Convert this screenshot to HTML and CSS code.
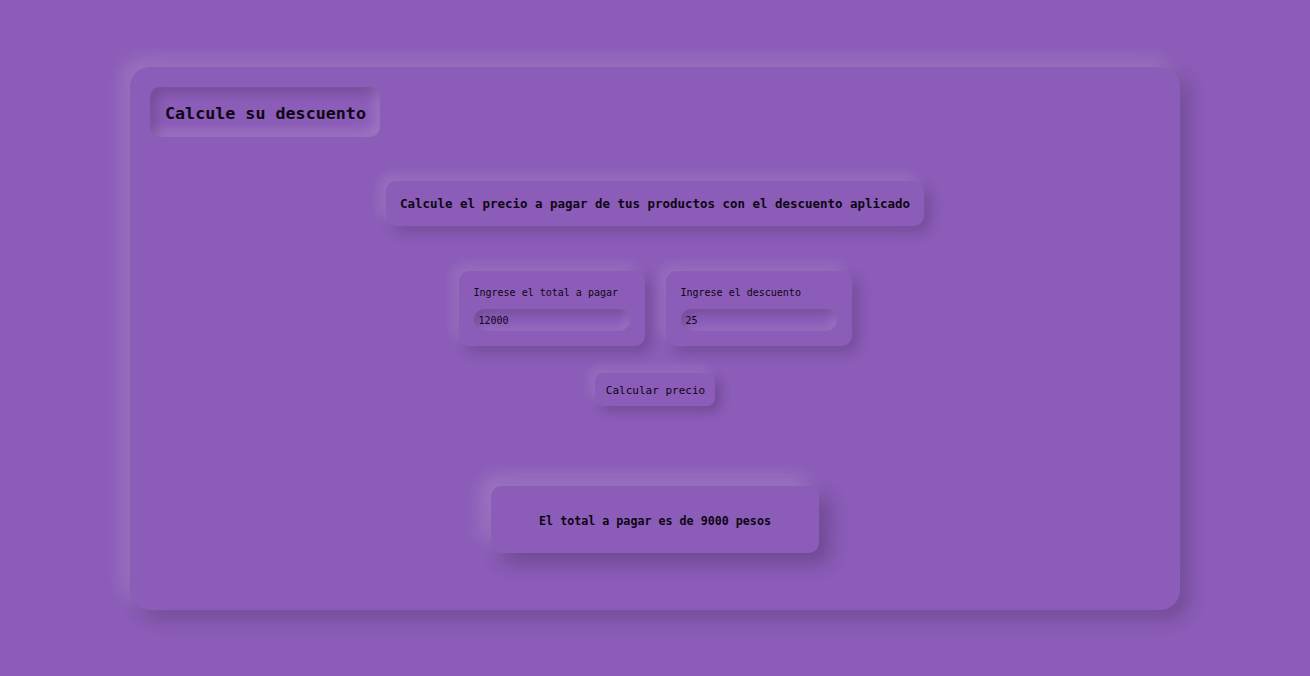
FILE: index.html
```html
<!DOCTYPE html>
<html lang="es">
<head>
<meta charset="utf-8">
<title>Calcule su descuento</title>
<link rel="stylesheet" href="styles.css">
</head>
<body>
<main class="card">
  <h1 class="title">Calcule su descuento</h1>
  <section class="content">
    <p class="subtitle">Calcule el precio a pagar de tus productos con el descuento aplicado</p>
    <div class="fields">
      <div class="field">
        <label class="label" for="total">Ingrese el total a pagar</label>
        <input class="input" id="total" type="text" value="12000">
      </div>
      <div class="field">
        <label class="label" for="desc">Ingrese el descuento</label>
        <input class="input" id="desc" type="text" value="25">
      </div>
    </div>
    <button class="btn" type="button">Calcular precio</button>
    <div class="result">El total a pagar es de 9000 pesos</div>
  </section>
</main>
</body>
</html>
```
FILE: styles.css
```css
* { box-sizing: border-box; }
html, body { margin: 0; padding: 0; }
body {
  background: #8b5cb8;
  font-family: "DejaVu Sans Mono", "Liberation Mono", monospace;
  color: #0e0614;
  padding-top: 67px;
  height: 676px;
  overflow: hidden;
}
.card {
  width: 1050px;
  height: 543px;
  margin: 0 auto;
  border-radius: 20px;
  background: #8b5cb8;
  box-shadow: -8px -8px 20px rgba(255,255,255,0.16), 8px 8px 20px rgba(0,0,0,0.2);
  padding: 20px;
}
.title {
  margin: 0;
  width: 230px;
  height: 50px;
  padding: 2px 15px 0;
  display: flex;
  align-items: center;
  white-space: nowrap;
  font-size: 16.7px;
  font-weight: bold;
  border-radius: 10px;
  background: #8b5cb8;
  box-shadow: inset 6px 6px 12px rgba(0,0,0,0.16), inset -6px -6px 12px rgba(255,255,255,0.16);
}
.content {
  display: flex;
  flex-direction: column;
  align-items: center;
  padding-top: 44px;
}
.subtitle {
  margin: 0;
  height: 45px;
  padding: 0 14px;
  display: flex;
  align-items: center;
  white-space: nowrap;
  font-size: 12.46px;
  font-weight: bold;
  border-radius: 10px;
  box-shadow: -6px -6px 14px rgba(255,255,255,0.14), 6px 6px 14px rgba(0,0,0,0.18);
}
.fields {
  display: flex;
  gap: 21px;
  margin-top: 45px;
}
.field {
  width: 186px;
  height: 75px;
  padding: 15px 15px 0;
  border-radius: 10px;
  display: flex;
  flex-direction: column;
  box-shadow: -6px -6px 14px rgba(255,255,255,0.13), 6px 6px 14px rgba(0,0,0,0.18);
}
.label {
  font-size: 10px;
  line-height: 13px;
  white-space: nowrap;
}
.input {
  margin-top: 10px;
  width: 156px;
  height: 22px;
  border: none;
  outline: none;
  border-radius: 11px;
  background: #8b5cb8;
  padding: 0 5px;
  font-family: inherit;
  font-size: 10px;
  color: #0e0614;
  box-shadow: inset 4px 4px 8px rgba(0,0,0,0.16), inset -4px -4px 8px rgba(255,255,255,0.12);
}
.btn {
  margin-top: 27px;
  width: 120px;
  height: 33px;
  border: none;
  border-radius: 8px;
  background: #8b5cb8;
  font-family: inherit;
  font-size: 11px;
  color: #0e0614;
  padding: 1px 0 0 1px;
  box-shadow: -5px -5px 12px rgba(255,255,255,0.13), 5px 5px 12px rgba(0,0,0,0.2);
}
.result {
  margin-top: 80px;
  width: 328px;
  height: 67px;
  padding-top: 2px;
  border-radius: 10px;
  display: flex;
  align-items: center;
  justify-content: center;
  white-space: nowrap;
  font-size: 11.68px;
  font-weight: bold;
  box-shadow: -10px -10px 20px rgba(255,255,255,0.16), 10px 10px 20px rgba(0,0,0,0.22);
}
```
